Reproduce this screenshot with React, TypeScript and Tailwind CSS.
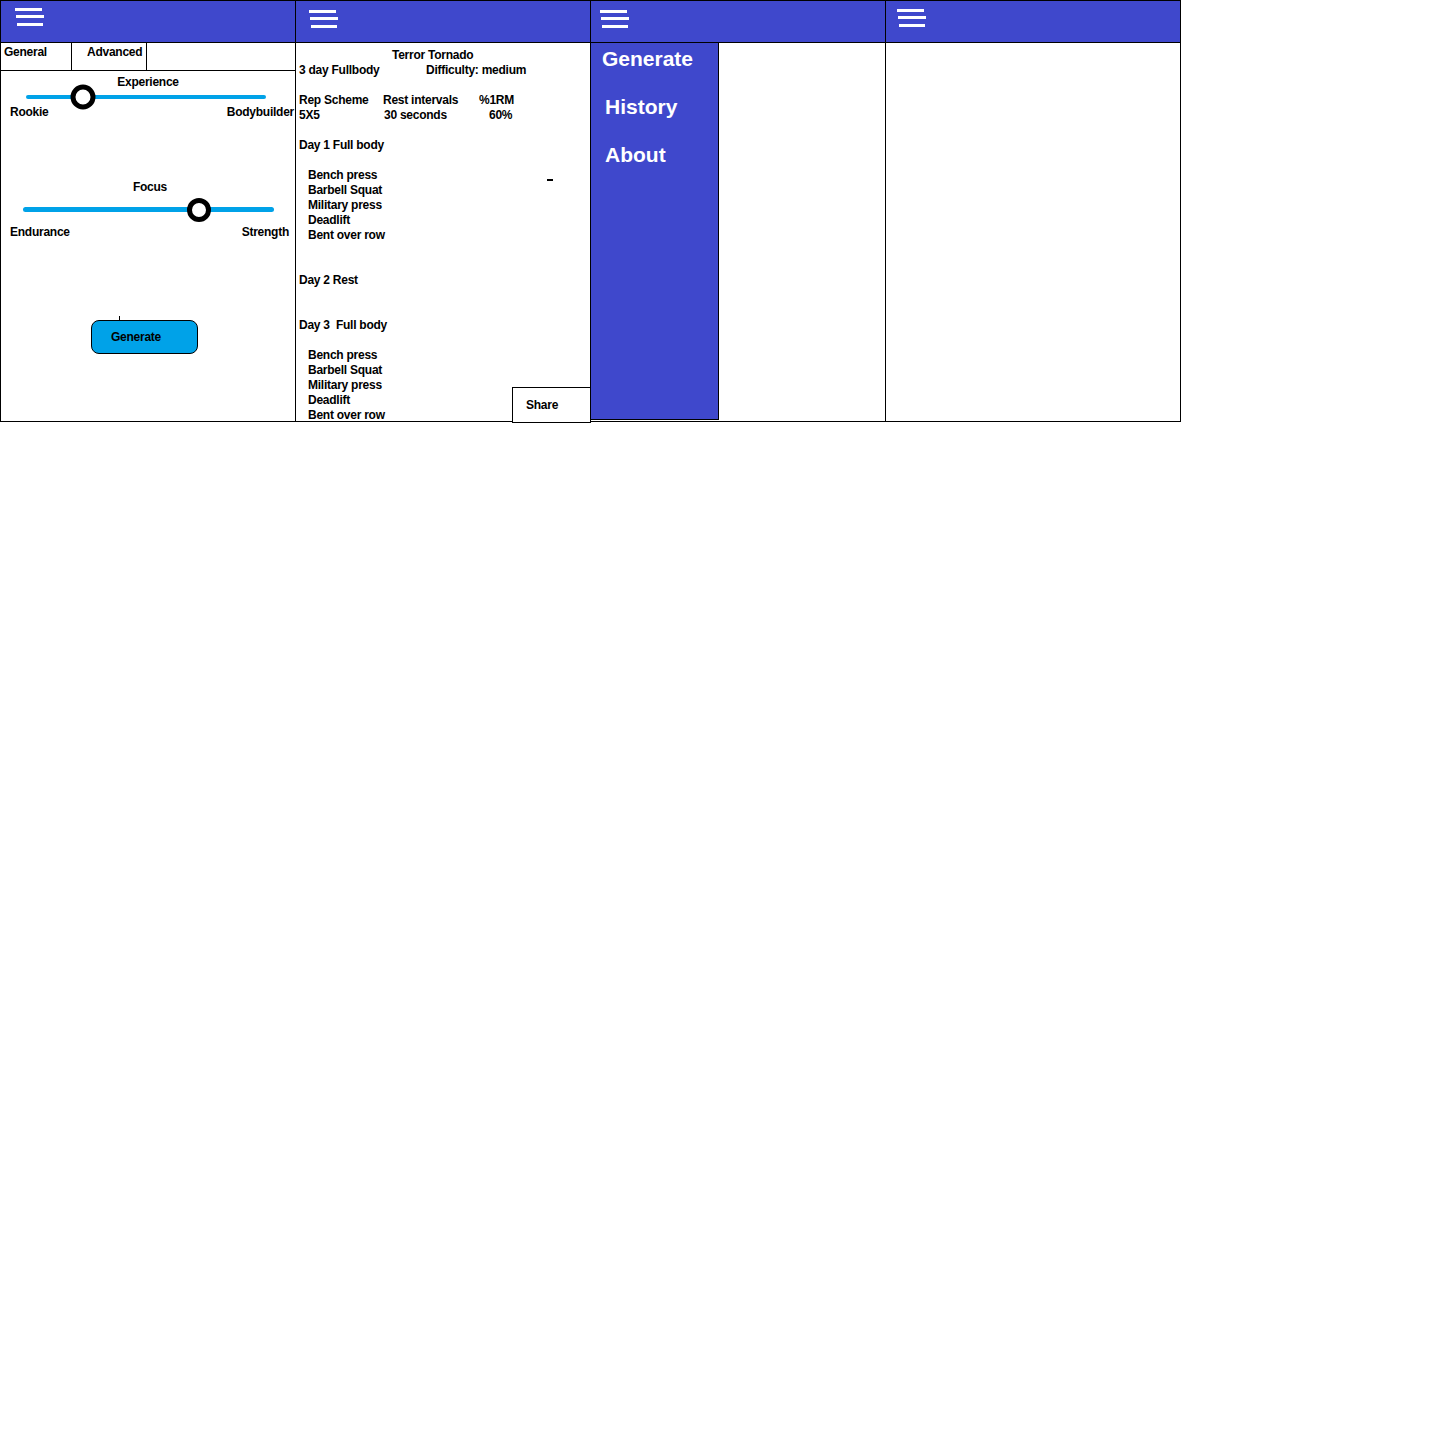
import React from 'react';

const Hamburger: React.FC<{ className: string }> = ({ className }) => (
  <svg width="30" height="20" viewBox="0 0 30 20" className={className}>
    <rect x="0" y="0" width="27" height="3" fill="#fff" />
    <rect x="1" y="7" width="28" height="3" fill="#fff" />
    <rect x="2" y="15" width="26" height="3" fill="#fff" />
  </svg>
);

const Header: React.FC<{ iconPos: string }> = ({ iconPos }) => (
  <div className="h-[42px] shrink-0 bg-[#3f48cc] border-b border-black">
    <Hamburger className={iconPos} />
  </div>
);

const GeneratePanel: React.FC = () => (
  <div className="w-[296px] h-[422px] shrink-0 border border-black flex flex-col">
    <Header iconPos="ml-[14px] mt-[7px]" />
    <div className="flex h-[28px] shrink-0 border-b border-black">
      <div className="w-[70px] pl-[3px] pt-[2px]">General</div>
      <div className="w-[76px] border-x border-black pl-[15px] pt-[2px]">Advanced</div>
    </div>

    <div className="mt-[4px] text-center">Experience</div>
    <div className="relative ml-[25px] mt-[5px] w-[240px] h-[4px] rounded-full bg-[#00a2e8]">
      <div className="absolute left-[57px] top-1/2 -translate-x-1/2 -translate-y-1/2 w-[25px] h-[25px] rounded-full border-[5px] border-black bg-white" />
    </div>
    <div className="mt-[6px] flex justify-between pl-[9px] pr-[1px]">
      <span>Rookie</span>
      <span>Bodybuilder</span>
    </div>

    <div className="mt-[60px] pl-[4px] text-center">Focus</div>
    <div className="relative ml-[22px] mt-[12px] w-[251px] h-[5px] rounded-full bg-[#00a2e8]">
      <div className="absolute left-[176px] top-1/2 -translate-x-1/2 -translate-y-1/2 w-[24px] h-[24px] rounded-full border-[5px] border-black bg-white" />
    </div>
    <div className="mt-[13px] flex justify-between pl-[9px] pr-[6px]">
      <span>Endurance</span>
      <span>Strength</span>
    </div>

    <div className="relative mt-[80px] ml-[90px] w-[107px] h-[34px] rounded-[8px] border border-black bg-[#00a2e8] pl-[19px] flex items-center">
      <div className="absolute left-[27px] top-[-5px] w-px h-[4px] bg-black" />
      Generate
    </div>
  </div>
);

const exercises = ['Bench press', 'Barbell Squat', 'Military press', 'Deadlift', 'Bent over row'];

const Blank: React.FC = () => <div className="h-[15px]" />;

const ProgramPanel: React.FC = () => (
  <div className="relative w-[295px] h-[422px] shrink-0 border-y border-r border-black flex flex-col">
    <Header iconPos="ml-[13px] mt-[9px]" />
    <div className="pt-[5px] pl-[3px]">
      <div className="pl-[93px]">Terror Tornado</div>
      <div className="flex">
        <span className="w-[127px]">3 day Fullbody</span>
        <span>Difficulty: medium</span>
      </div>
      <Blank />
      <div className="flex">
        <span className="w-[84px]">Rep Scheme</span>
        <span className="w-[96px]">Rest intervals</span>
        <span>%1RM</span>
      </div>
      <div className="flex">
        <span className="w-[85px]">5X5</span>
        <span className="w-[105px]">30 seconds</span>
        <span>60%</span>
      </div>
      <Blank />
      <div>Day 1 Full body</div>
      <Blank />
      {exercises.map((e) => (
        <div key={'a' + e} className="pl-[9px]">{e}</div>
      ))}
      <Blank />
      <Blank />
      <div>Day 2 Rest</div>
      <Blank />
      <Blank />
      <div className="whitespace-pre">Day 3  Full body</div>
      <Blank />
      {exercises.map((e) => (
        <div key={'b' + e} className="pl-[9px]">{e}</div>
      ))}
    </div>

    <div className="absolute left-[251px] top-[178px] w-[6px] h-[2px] bg-black" />
    <div className="absolute left-[216px] top-[386px] w-[79px] h-[36px] border border-black bg-white pl-[13px] flex items-center">
      Share
    </div>
  </div>
);

const MenuPanel: React.FC = () => (
  <div className="w-[295px] h-[422px] shrink-0 border-y border-r border-black flex flex-col">
    <Header iconPos="ml-[9px] mt-[9px]" />
    <nav className="w-[128px] h-[377px] bg-[#3f48cc] border-r border-b border-black pt-[4px] flex flex-col gap-[24px] text-white text-[21px] leading-[24px] tracking-normal">
      <span className="pl-[11px]">Generate</span>
      <span className="pl-[14px]">History</span>
      <span className="pl-[14px]">About</span>
    </nav>
  </div>
);

const EmptyPanel: React.FC = () => (
  <div className="w-[295px] h-[422px] shrink-0 border-y border-r border-black flex flex-col">
    <Header iconPos="ml-[11px] mt-[8px]" />
  </div>
);

const App: React.FC = () => {
  return (
    <div className="w-[1440px] h-[1444px] bg-white text-black font-['Liberation_Sans',Arial,sans-serif] font-bold text-[12px] leading-[15px] tracking-[-0.25px]">
      <div className="flex">
        <GeneratePanel />
        <ProgramPanel />
        <MenuPanel />
        <EmptyPanel />
      </div>
    </div>
  );
};

export default App;
